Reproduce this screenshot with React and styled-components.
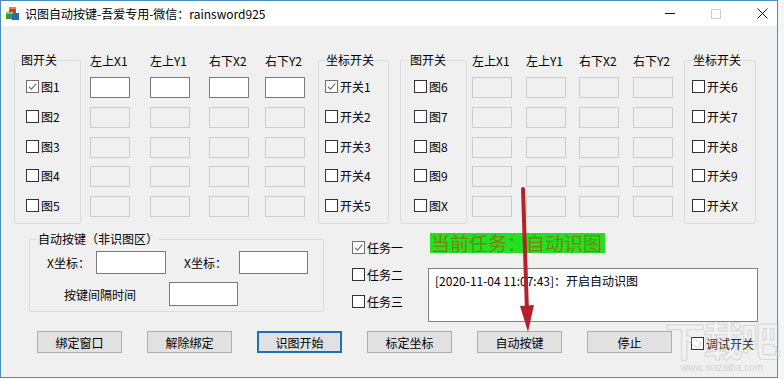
import styled, { createGlobalStyle } from "styled-components";

const GlobalStyle = createGlobalStyle`
  body {
    margin: 0;
    background: #f3f6f9;
    font-family: "Noto Sans CJK SC", "Microsoft YaHei", sans-serif;
    font-size: 12px;
    color: #000;
  }
`;

const leftPanel = {
  pics: ["图1", "图2", "图3", "图4", "图5"],
  switches: ["开关1", "开关2", "开关3", "开关4", "开关5"],
  picBox: { w: 67, ml: 0, pl: 11, lm: 5 },
  colMargins: [9, 20, 19, 16],
  switchBox: { w: 71, ml: 13, pl: 6, lm: 6 },
  activeRow: 0,
};

const rightPanel = {
  pics: ["图6", "图7", "图8", "图9", "图X"],
  switches: ["开关6", "开关7", "开关8", "开关9", "开关X"],
  picBox: { w: 67, ml: 11, pl: 13, lm: 8 },
  colMargins: [5, 14, 13, 14],
  switchBox: { w: 72, ml: 11, pl: 7, lm: 7 },
  activeRow: -1,
};

const headers = ["左上X1", "左上Y1", "右下X2", "右下Y2"];
const buttons = ["绑定窗口", "解除绑定", "识图开始", "标定坐标", "自动按键", "停止"];

const App = () => {
  return (
    <>
      <GlobalStyle />
      <Window>
        <TitleBar>
          <AppIcon />
          <Title>识图自动按键-吾爱专用-微信：rainsword925</Title>
          <Controls>
            <MinGlyph />
            <MaxGlyph />
            <CloseGlyph>
              <svg width="11" height="11" viewBox="0 0 11 11">
                <path d="M0.5 0.5 L10.5 10.5 M10.5 0.5 L0.5 10.5" stroke="#111" strokeWidth="1" />
              </svg>
            </CloseGlyph>
          </Controls>
        </TitleBar>

        <Body>
          <TopRow>
            <Panel data={leftPanel} />
            <Panel data={rightPanel} />
          </TopRow>

          <MiddleRow>
            <AutoGroup>
              <Legend $lm={7}>自动按键（非识图区）</Legend>
              <FormRow>
                <FieldLabel $w={49} $ml={17}>X坐标：</FieldLabel>
                <TextInput $w={70} $h={23} />
                <FieldLabel $w={55} $ml={18}>X坐标：</FieldLabel>
                <TextInput $w={69} $h={23} />
              </FormRow>
              <FormRow $mt={8}>
                <FieldLabel $w={105} $ml={34}>按键间隔时间</FieldLabel>
                <TextInput $w={69} $h={24} />
              </FormRow>
            </AutoGroup>

            <TaskList>
              <Check label="任务一" checked />
              <Check label="任务二" />
              <Check label="任务三" />
            </TaskList>

            <StatusColumn>
              <StatusBadge>当前任务：自动识图</StatusBadge>
              <LogBox>[2020-11-04 11:07:43]：开启自动识图</LogBox>
            </StatusColumn>
          </MiddleRow>

          <ButtonRow>
            {buttons.map((b) => (
              <Button key={b} $focused={b === "识图开始"}>{b}</Button>
            ))}
            <DebugSwitch>
              <Check label="调试开关" />
            </DebugSwitch>
          </ButtonRow>
        </Body>
      </Window>

      <Arrow width="30" height="150" viewBox="0 0 30 150">
        <path d="M8 3 L12 126" stroke="#b3222a" strokeWidth="4" strokeLinecap="round" fill="none" />
        <polygon points="5,120 19,119 13,146" fill="#b3222a" />
      </Arrow>

      <Watermark>
        <WatermarkBig>下载吧</WatermarkBig>
        <WatermarkSmall>www.xiazaiba.com</WatermarkSmall>
      </Watermark>
    </>
  );
};

export default App;

// legend sits inside the fieldset padding, so its margin is the wanted offset minus that padding
const Panel = ({ data }) => (
  <>
    <Group $w={data.picBox.w} $ml={data.picBox.ml} $pl={data.picBox.pl}>
      <Legend $lm={data.picBox.lm - data.picBox.pl}>图开关</Legend>
      <RowStack>
        {data.pics.map((p, i) => (
          <Check key={p} label={p} checked={i === data.activeRow} />
        ))}
      </RowStack>
    </Group>
    {headers.map((h, c) => (
      <CoordColumn key={h} $ml={data.colMargins[c]}>
        <ColumnHead>{h}</ColumnHead>
        <RowStack>
          {data.pics.map((p, i) => (
            <TextInput key={p} $w={40} $h={21} $disabled={i !== data.activeRow} />
          ))}
        </RowStack>
      </CoordColumn>
    ))}
    <Group $w={data.switchBox.w} $ml={data.switchBox.ml} $pl={data.switchBox.pl}>
      <Legend $lm={data.switchBox.lm - data.switchBox.pl}>坐标开关</Legend>
      <RowStack>
        {data.switches.map((s, i) => (
          <Check key={s} label={s} checked={i === data.activeRow} />
        ))}
      </RowStack>
    </Group>
  </>
);

const Check = ({ label, checked }) => (
  <CheckRow>
    <CheckBox $checked={checked}>
      {checked && (
        <svg width="9" height="9" viewBox="0 0 9 9">
          <path d="M0.8 4.6 L3.4 7.2 L8.3 1.6" stroke="#6a6a6a" strokeWidth="1.1" fill="none" />
        </svg>
      )}
    </CheckBox>
    <span>{label}</span>
  </CheckRow>
);

const AppIcon = () => (
  <svg width="15" height="15" viewBox="0 0 15 15">
    <rect x="1" y="6" width="7" height="7" fill="#3a9a3a" />
    <rect x="7" y="7" width="7" height="7" fill="#2a66c8" />
    <rect x="4" y="1" width="7" height="7" fill="#d23a2a" />
    <rect x="4" y="1" width="7" height="2" fill="#f07a5a" />
    <rect x="1" y="6" width="7" height="2" fill="#7acb6a" />
  </svg>
);

const Window = styled.div`
  width: 778px;
  height: 378px;
  box-sizing: border-box;
  border: 1px solid #4b8dbd;
  background: #f0f0f0;
  display: flex;
  flex-direction: column;
  overflow: hidden;
`;

const TitleBar = styled.div`
  height: 25px;
  background: #fff;
  display: flex;
  align-items: center;
  padding-left: 4px;
  flex-shrink: 0;
`;

const Title = styled.div`
  margin-left: 5px;
  font-size: 12px;
  line-height: 14px;
  color: #000;
`;

const Controls = styled.div`
  margin-left: auto;
  display: flex;
  align-items: center;
  padding-right: 9px;
`;

const MinGlyph = styled.span`
  width: 10px;
  height: 1px;
  background: #111;
  margin-right: 36px;
`;

const MaxGlyph = styled.span`
  width: 10px;
  height: 10px;
  box-sizing: border-box;
  border: 1px solid #cfcfcf;
  margin-right: 36px;
`;

const CloseGlyph = styled.span`
  display: flex;
  width: 11px;
  height: 11px;
`;

const Body = styled.div`
  flex: 1;
  padding: 28px 0 0 13px;
  display: flex;
  flex-direction: column;
`;

const TopRow = styled.div`
  display: flex;
  align-items: flex-start;
  height: 170px;
`;

const Group = styled.fieldset`
  box-sizing: border-box;
  margin: 0 0 0 ${(p) => p.$ml}px;
  width: ${(p) => p.$w}px;
  min-width: 0;
  height: 170px;
  border: 1px solid #dcdcdc;
  border-radius: 2px;
  padding: 10px 0 0 ${(p) => p.$pl}px;
`;

const Legend = styled.legend`
  margin-left: ${(p) => p.$lm}px;
  padding: 0 1px;
  font-size: 12px;
  line-height: 12px;
  white-space: nowrap;
`;

const RowStack = styled.div`
  display: flex;
  flex-direction: column;
  gap: 8.75px;
`;

const CheckRow = styled.label`
  display: flex;
  align-items: center;
  gap: 2px;
  height: 21px;
  font-size: 12px;
  white-space: nowrap;
`;

const CheckBox = styled.span`
  width: 13px;
  height: 13px;
  box-sizing: border-box;
  border: 1px solid ${(p) => (p.$checked ? "#707070" : "#333")};
  background: #fff;
  display: inline-flex;
  align-items: center;
  justify-content: center;
  flex-shrink: 0;
`;

const CoordColumn = styled.div`
  margin-left: ${(p) => p.$ml}px;
  width: 40px;
  padding-top: 1px;
  display: flex;
  flex-direction: column;
`;

const ColumnHead = styled.div`
  line-height: 12px;
  font-size: 12px;
  white-space: nowrap;
  margin-bottom: 10px;
`;

const TextInput = styled.div`
  box-sizing: border-box;
  width: ${(p) => p.$w}px;
  height: ${(p) => p.$h}px;
  background: ${(p) => (p.$disabled ? "#f0f0f0" : "#fff")};
  border: 1px solid ${(p) => (p.$disabled ? "#cccccc" : "#7a7a7a")};
  flex-shrink: 0;
`;

const MiddleRow = styled.div`
  display: flex;
  align-items: flex-start;
  margin-top: 9px;
`;

const AutoGroup = styled.fieldset`
  box-sizing: border-box;
  margin: 0 0 0 15px;
  width: 295px;
  height: 79px;
  min-width: 0;
  border: 1px solid #dcdcdc;
  border-radius: 2px;
  padding: 6px 0 0 0;
`;

const FormRow = styled.div`
  display: flex;
  align-items: center;
  margin-top: ${(p) => p.$mt || 0}px;
`;

const FieldLabel = styled.span`
  width: ${(p) => p.$w}px;
  margin-left: ${(p) => p.$ml}px;
  white-space: nowrap;
  flex-shrink: 0;
`;

const TaskList = styled.div`
  margin-left: 28px;
  padding-top: 4px;
  display: flex;
  flex-direction: column;
  gap: 6px;
`;

const StatusColumn = styled.div`
  margin-left: 25px;
  display: flex;
  flex-direction: column;
`;

const StatusBadge = styled.div`
  align-self: flex-start;
  margin-left: 2px;
  background: #22e022;
  color: #7a8410;
  font-size: 19px;
  line-height: 20px;
  height: 20px;
  padding: 0 3px 0 1px;
  white-space: nowrap;
`;

const LogBox = styled.div`
  box-sizing: border-box;
  margin-top: 15px;
  width: 330px;
  height: 54px;
  background: #fff;
  border: 1px solid #828282;
  padding: 4px 0 0 6px;
  line-height: 16px;
  white-space: nowrap;
`;

const ButtonRow = styled.div`
  display: flex;
  align-items: center;
  gap: 25px;
  margin-top: 8px;
  padding-left: 23px;
`;

const Button = styled.div`
  box-sizing: border-box;
  width: 85px;
  height: 22px;
  display: flex;
  align-items: center;
  justify-content: center;
  background: #e1e1e1;
  border: 1px solid ${(p) => (p.$focused ? "#1f6fb8" : "#adadad")};
  box-shadow: ${(p) => (p.$focused ? "inset 0 0 0 1px #1f6fb8" : "none")};
  font-size: 12px;
`;

const DebugSwitch = styled.div`
  margin-left: -6px;
  margin-top: 3px;
`;

const Arrow = styled.svg`
  position: absolute;
  left: 515px;
  top: 186px;
  pointer-events: none;
`;

const Watermark = styled.div`
  position: absolute;
  left: 662px;
  top: 316px;
  width: 120px;
  display: flex;
  flex-direction: column;
  align-items: center;
  white-space: nowrap;
  pointer-events: none;
`;

const WatermarkBig = styled.div`
  font-size: 40px;
  line-height: 46px;
  font-weight: 700;
  color: rgba(255, 255, 255, 0.2);
  -webkit-text-stroke: 1px rgba(170, 170, 170, 0.4);
  letter-spacing: -2px;
`;

const WatermarkSmall = styled.div`
  font-family: "Liberation Sans", sans-serif;
  font-size: 10px;
  line-height: 12px;
  color: rgba(150, 150, 150, 0.35);
`;
